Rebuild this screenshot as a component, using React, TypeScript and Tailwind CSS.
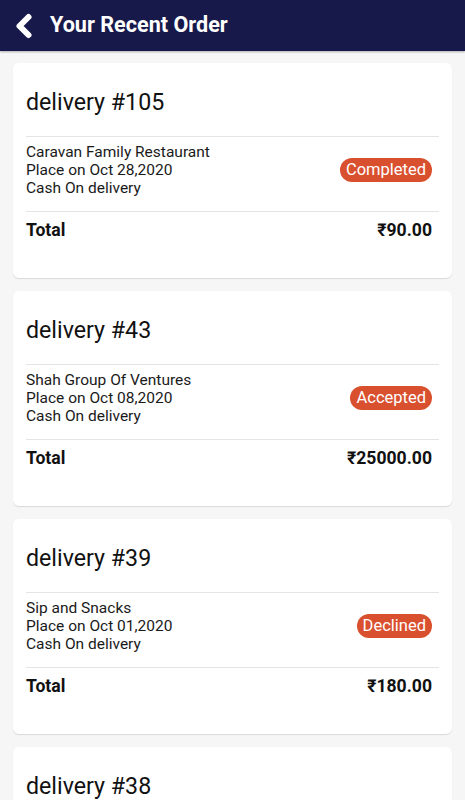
import { ChevronLeft } from 'lucide-react'

type Order = {
  id: number
  shop: string
  date: string
  status: string
  total: string
}

const orders: Order[] = [
  { id: 105, shop: 'Caravan Family Restaurant', date: 'Oct 28,2020', status: 'Completed', total: '₹90.00' },
  { id: 43, shop: 'Shah Group Of Ventures', date: 'Oct 08,2020', status: 'Accepted', total: '₹25000.00' },
  { id: 39, shop: 'Sip and Snacks', date: 'Oct 01,2020', status: 'Declined', total: '₹180.00' },
  { id: 38, shop: 'Caravan Family Restaurant', date: 'Sep 30,2020', status: 'Completed', total: '₹120.00' },
]

function OrderCard({ order }: { order: Order }) {
  return (
    <div className="bg-white rounded-md shadow-[0_1px_1px_rgba(0,0,0,0.12)] px-[13px] pt-[26px] pb-[38px]">
      <h2 className="text-[23.2px] leading-[26px] text-[#111] font-normal">delivery #{order.id}</h2>
      <div className="mt-[21px] border-t border-[#e4e4e4]" />
      <div className="flex items-center justify-between pt-[6px] pb-[14px] pr-[7px]">
        <div className="text-[15.5px] leading-[18px] text-[#1a1a1a]">
          <div>{order.shop}</div>
          <div>Place on {order.date}</div>
          <div>Cash On delivery</div>
        </div>
        <span className="bg-[#d9502f] text-white text-[16.5px] leading-[24px] px-[6px] rounded-full">
          {order.status}
        </span>
      </div>
      <div className="border-t border-[#e4e4e4]" />
      <div className="flex items-center justify-between pt-[8px] pr-[7px] text-[17.6px] leading-[20px] font-bold text-[#111]">
        <span>Total</span>
        <span>{order.total}</span>
      </div>
    </div>
  )
}

export default function App() {
  return (
    <div className="h-[800px] bg-[#f6f6f6] font-['Roboto',sans-serif] overflow-hidden">
      <header className="h-[51px] bg-[#18194b] flex items-center pl-[6px] gap-[8px] shadow-[0_1px_2px_rgba(0,0,0,0.3)]">
        <ChevronLeft className="text-white" size={36} strokeWidth={4} />
        <h1 className="text-white text-[21.6px] font-bold">Your Recent Order</h1>
      </header>
      <main className="flex flex-col gap-[13px] px-[13px] pt-[12px]">
        {orders.map(o => (
          <OrderCard key={o.id} order={o} />
        ))}
      </main>
    </div>
  )
}
